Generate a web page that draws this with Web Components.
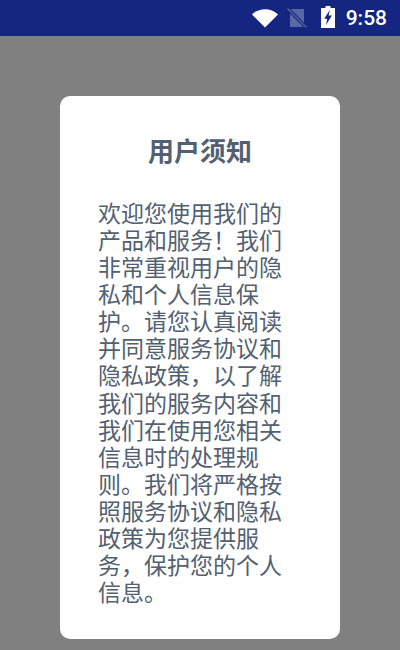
<!DOCTYPE html>
<html lang="zh-CN">
<head>
<meta charset="utf-8">
<title>用户须知</title>
<style>
  html, body { margin: 0; height: 100%; }
  body { width: 400px; height: 650px; overflow: hidden; background: #808080; display: flex; flex-direction: column; }
</style>
</head>
<body>
<status-bar time="9:58"></status-bar>
<notice-scrim>
  <notice-card heading="用户须知">欢迎您使用我们的产品和服务！我们非常重视用户的隐私和个人信息保护。请您认真阅读并同意服务协议和隐私政策，以了解我们的服务内容和我们在使用您相关信息时的处理规则。我们将严格按照服务协议和隐私政策为您提供服务，保护您的个人信息。</notice-card>
</notice-scrim>
<script>
class StatusBar extends HTMLElement {
  constructor(){
    super();
    this.attachShadow({mode: "open"});
  }

  static get styles(){
    return /* css */`
      :host {
        display: flex;
        flex: none;
        height: 36px;
        align-items: center;
        justify-content: flex-end;
        background: #14267f;
        color: #fff;
        font-family: "Roboto", "Liberation Sans", sans-serif;
      }
      svg { display: block; flex: none; }
      .wifi { margin-right: 9px; }
      .sim { margin-right: 14px; }
      .battery { margin-right: 11px; margin-bottom: 2px; }
      .time { font-size: 21px; font-weight: 500; margin-right: 13px; line-height: 36px; }
    `
  }

  connectedCallback() {
    this.shadowRoot.innerHTML = /* html */`
    <style>${StatusBar.styles}</style>
    <svg class="wifi" width="26" height="20" viewBox="0 0 26 20"><path d="M0 6.5 C7 -0.5 19 -0.5 26 6.5 L13 19.5 Z" fill="#fff"/></svg>
    <svg class="sim" width="20" height="20" viewBox="0 0 20 20">
      <path d="M3 1 H17 V19 H3 Z" fill="#fff" fill-opacity=".3"/>
      <path d="M0 0 L20 20" stroke="#14267f" stroke-width="3.6"/>
      <path d="M0.5 0.5 L19.5 19.5" stroke="#fff" stroke-opacity=".3" stroke-width="1.3"/>
    </svg>
    <svg class="battery" width="14" height="22" viewBox="0 0 14 22">
      <path d="M4.5 0 H9.5 V2 H14 V22 H0 V2 H4.5 Z" fill="#fff"/>
      <path d="M8.8 4 L3.2 12.8 H6.2 L5 19 L10.9 9.6 H7.6 Z" fill="#14267f"/>
    </svg>
    <span class="time">${this.getAttribute("time")}</span>
    `
  }
}

class NoticeScrim extends HTMLElement {
  constructor(){
    super();
    this.attachShadow({mode: "open"});
    this.shadowRoot.innerHTML = /* html */`
    <style>
      :host {
        display: flex;
        flex: 1;
        justify-content: center;
        align-items: flex-start;
        padding-top: 60px;
        background: #808080;
      }
    </style>
    <slot></slot>
    `
  }
}

class NoticeCard extends HTMLElement {
  constructor(){
    super();
    this.attachShadow({mode: "open"});
  }

  static get styles(){
    return /* css */`
      :host {
        display: block;
        box-sizing: border-box;
        width: 280px;
        height: 543px;
        padding: 36px 38px 0;
        background: #fff;
        border-radius: 10px;
        color: #526071;
        font-family: "Noto Sans CJK SC", "Noto Sans", sans-serif;
      }
      h2 {
        margin: 0 0 31px;
        font-size: 26px;
        line-height: 36px;
        font-weight: 700;
        text-align: center;
      }
      .body {
        width: 184px;
        font-size: 23px;
        line-height: 27.08px;
      }
    `
  }

  connectedCallback() {
    this.shadowRoot.innerHTML = /* html */`
    <style>${NoticeCard.styles}</style>
    <h2>${this.getAttribute("heading")}</h2>
    <div class="body"><slot></slot></div>
    `
  }
}

customElements.define('status-bar', StatusBar);
customElements.define('notice-scrim', NoticeScrim);
customElements.define('notice-card', NoticeCard);
</script>
</body>
</html>
